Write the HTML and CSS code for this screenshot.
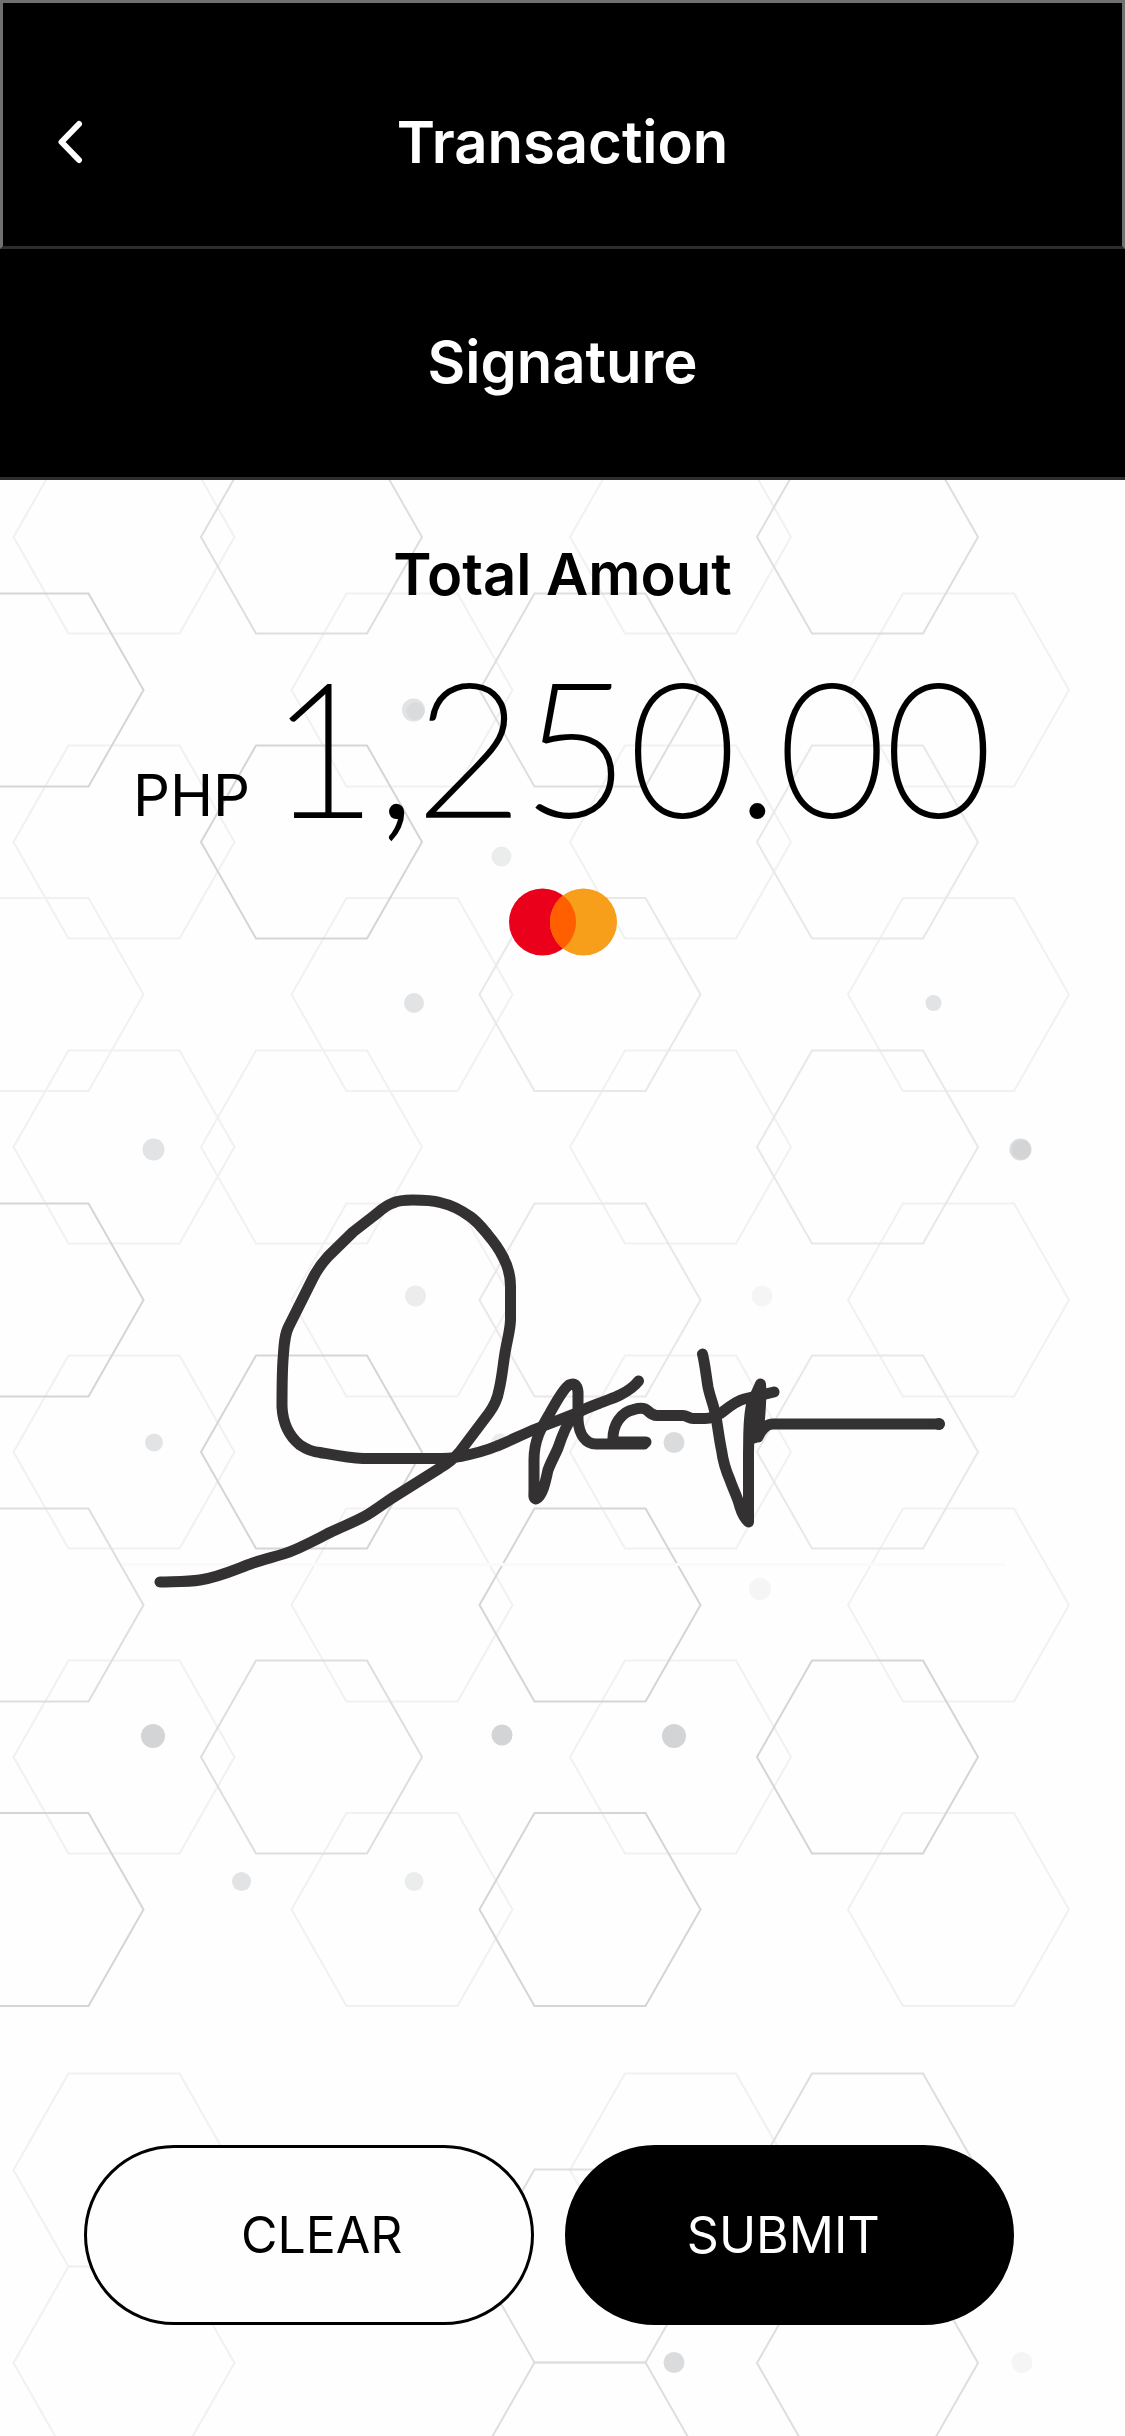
FILE: index.html
```html
<!DOCTYPE html>
<html lang="en">
<head>
<meta charset="utf-8">
<meta name="viewport" content="width=device-width, initial-scale=1">
<title>Transaction</title>
<link rel="stylesheet" href="styles.css">
</head>
<body>
<div class="screen">
  <header class="topbar">
    <button class="back" type="button" aria-label="Back">
      <svg class="back-icon" viewBox="0 0 26 44" aria-hidden="true"><path d="M22 4 4.500 22 22 40"/></svg>
    </button>
    <h1 class="heading">Transaction</h1>
  </header>
  <div class="subbar"><h2 class="heading">Signature</h2></div>

  <main class="content">
    <svg class="pattern" viewBox="0 480 1125 1956" preserveAspectRatio="xMidYMin slice" aria-hidden="true">
      <defs>
        <path id="hex" d="M-110.500 0-55.500-96.500H55.500L110.500 0 55.500 96.500H-55.500Z" vector-effect="non-scaling-stroke"/>
      </defs>
      <g class="hex hex-faint">
        <use href="#hex" x="124" y="537"/><use href="#hex" x="680.500" y="537"/>
        <use href="#hex" x="402" y="690"/><use href="#hex" x="958.500" y="690"/>
        <use href="#hex" x="124" y="842"/><use href="#hex" x="680.500" y="842"/>
        <use href="#hex" x="33" y="994.500"/><use href="#hex" x="402" y="994.500"/><use href="#hex" x="958.500" y="994.500"/>
        <use href="#hex" x="124" y="1147"/><use href="#hex" x="311.500" y="1147"/><use href="#hex" x="680.500" y="1147"/>
        <use href="#hex" x="402" y="1300"/><use href="#hex" x="958.500" y="1300"/>
        <use href="#hex" x="124" y="1452"/><use href="#hex" x="680.500" y="1452"/>
        <use href="#hex" x="402" y="1605"/><use href="#hex" x="958.500" y="1605"/>
        <use href="#hex" x="124" y="1757"/><use href="#hex" x="680.500" y="1757"/>
        <use href="#hex" x="402" y="1909.500"/><use href="#hex" x="958.500" y="1909.500"/>
        <use href="#hex" x="124" y="2170"/><use href="#hex" x="680.500" y="2170"/>
        <use href="#hex" x="124" y="2363"/>
      </g>
      <g class="hex hex-light">
        <use href="#hex" x="867.500" y="842"/><use href="#hex" x="590" y="994.500"/>
        <use href="#hex" x="867.500" y="1147"/><use href="#hex" x="590" y="1300"/>
        <use href="#hex" x="867.500" y="1452"/>
      </g>
      <g class="hex hex-mid">
        <use href="#hex" x="311.500" y="537"/><use href="#hex" x="867.500" y="537"/>
        <use href="#hex" x="590" y="690"/><use href="#hex" x="33" y="1605"/>
        <use href="#hex" x="311.500" y="1757"/><use href="#hex" x="867.500" y="2170"/>
        <use href="#hex" x="590" y="2266"/><use href="#hex" x="867.500" y="2363"/>
        <use href="#hex" x="590" y="2459"/>
      </g>
      <g class="hex hex-dark">
        <use href="#hex" x="33" y="690"/><use href="#hex" x="311.500" y="842"/>
        <use href="#hex" x="33" y="1300"/><use href="#hex" x="311.500" y="1452"/>
        <use href="#hex" x="590" y="1605"/><use href="#hex" x="867.500" y="1757"/>
        <use href="#hex" x="33" y="1909.500"/><use href="#hex" x="590" y="1909.500"/>
      </g>
      <path d="M123 1564.500H1005" stroke="#fafafa" stroke-width="3"/>
      <g fill="#e2e3e5">
        <circle cx="413.500" cy="710" r="11.500"/><circle cx="414" cy="1003" r="10"/>
        <circle cx="933.500" cy="1003" r="8"/><circle cx="153.500" cy="1149.500" r="11"/>
        <circle cx="154" cy="1442.500" r="9"/><circle cx="241.500" cy="1881.500" r="9.500"/>
      </g>
      <g fill="#ebedec">
        <circle cx="501.500" cy="856.500" r="10"/><circle cx="415.500" cy="1296" r="10.500"/>
        <circle cx="500" cy="1442" r="8.500"/><circle cx="414" cy="1881.500" r="9.500"/>
      </g>
      <g fill="#f5f5f5">
        <circle cx="762" cy="1296" r="10.500"/><circle cx="760" cy="1589" r="11"/>
        <circle cx="1022" cy="2362.500" r="10.500"/>
      </g>
      <g fill="#dadbdd">
        <circle cx="415.500" cy="711" r="9"/><circle cx="674" cy="1442.500" r="10.500"/>
        <circle cx="1020.500" cy="1149.500" r="11"/><circle cx="674" cy="2362.500" r="10.500"/>
      </g>
      <g fill="#d3d4d6">
        <circle cx="1021.500" cy="1149.500" r="9.500"/><circle cx="153" cy="1736" r="12"/>
        <circle cx="502" cy="1735" r="10.500"/><circle cx="674" cy="1736" r="12"/>
      </g>
    </svg>

    <section class="summary">
      <h3 class="label">Total Amout</h3>
      <p class="amount"><span class="currency">PHP</span> <span class="value">1,250.00</span></p>
      <svg class="brand" viewBox="0 0 108 68" role="img" aria-label="Mastercard">
        <circle cx="33.500" cy="34" r="33.500" fill="#eb001b"/>
        <circle cx="74.500" cy="34" r="33.500" fill="#f79e1b"/>
        <path d="M54 7.500a33.500 33.500 0 0 1 0 53 33.500 33.500 0 0 1 0-53Z" fill="#ff5f00"/>
      </svg>
    </section>

    <svg class="signature" viewBox="0 1180 1125 420" role="img" aria-label="Customer signature">
      <path d="M160 1582C175 1581.500 188 1582 200 1580 220 1577 236 1569 253 1563 267 1558 280 1556 293 1550.500 306 1545 318 1538.500 330 1532.500 343 1526 355 1522 367 1515 377 1509 387 1501 397 1495L440 1468Q451 1462 460 1451.500L489 1413Q497 1402 499 1390C502 1378 503 1365 505 1353 507 1340 510 1332 510.500 1320V1290C511 1278 508 1266 503 1257 499 1249 494 1242 488 1235 483 1229 477 1221 470 1216.500 461 1210 451 1205 440 1202.500 431 1200 422 1200 413 1200 407 1200 399 1200 393 1203 386 1205 380 1211 373 1216.500L353 1232 328 1256.500C322 1263 317 1270 313 1278L289 1326C284 1335 284 1348 283 1360 282 1375 282 1392 282 1407 283 1425 290 1437 300 1445 306 1449 313 1452 320 1452.500 334 1455 349 1458 363 1458.500H433C442 1458.500 452 1458.500 460 1456.500 473 1454 485 1451 497 1446 510 1441 523 1434 537 1428.500L577 1413C584 1409 592 1406 600 1403 607 1400 614 1398 620 1395 628 1391 634 1387 638.500 1381"/>
      <path d="M572 1418C566 1425 562 1436 558 1448 555 1455 551 1462 548 1470 546 1479 543 1496 536 1499 533 1498 534 1495 534 1490V1460C534 1440 541 1428 550 1413 555 1404 563 1389 569 1385Q577 1381 578 1392V1420C579 1435 586 1444 596 1444H644"/>
      <path d="M646 1442H613C612 1425 621 1412 634 1409.500 639 1408 645 1408 648 1411 651 1414 653 1415.500 657 1415.500H683C687 1415.500 689 1418.500 693 1418.500H705C712 1418.500 716 1416 721 1413 729 1407 736 1401 744 1399L774 1392"/>
      <path d="M702.500 1354C705 1364 706 1375 708 1387 710 1397 714 1406 716 1417 718 1428 719 1438 721.500 1450 723 1461 726 1471 730 1480 733 1489 738 1498 740 1507Q743 1517 748.500 1522V1453C749 1435 748 1418 752 1403L760.500 1384C762 1400 759 1421 758 1437Q764 1424 773 1424H939M752 1405 754 1438"/>
      <circle class="pen-stop" cx="939" cy="1424" r="6"/>
    </svg>

    <div class="actions">
      <button class="button button-outline" type="button">CLEAR</button>
      <button class="button button-solid" type="button">SUBMIT</button>
    </div>
  </main>
</div>
</body>
</html>
```
FILE: styles.css
```css
*, *::before, *::after { box-sizing: border-box; }
body {
  margin: 0;
  background: #fefefe;
  color: #000;
  font-family: Inter, "Noto Sans", sans-serif;
}
h1, h2, h3, p { margin: 0; }
.screen {
  display: flex;
  flex-direction: column;
  min-height: 100vh;
}
.topbar {
  display: grid;
  grid-template-columns: 84px 1fr 84px;
  align-items: end;
  padding: 109px 0 74px;
  background: #000;
  border: 3px solid #707070;
  border-bottom-color: #2d2d2d;
}
.subbar {
  padding: 83px 0 85px;
  background: #000;
  border-bottom: 3px solid #2d2d2d;
}
.heading {
  font-size: 58px;
  font-weight: 600;
  line-height: 60px;
  text-align: center;
  color: #fff;
}
.back {
  display: flex;
  align-items: center;
  height: 60px;
  padding: 0 0 0 54px;
  border: 0;
  background: none;
}
.back-icon {
  width: 26px;
  height: 44px;
  fill: none;
  stroke: #fff;
  stroke-width: 6;
  stroke-linecap: round;
  stroke-linejoin: round;
}
.content {
  position: relative;
  display: flex;
  flex: 1;
  flex-direction: column;
  isolation: isolate;
}
.pattern {
  position: absolute;
  inset: 0;
  z-index: -1;
  width: 100%;
  height: 100%;
}
.hex { fill: none; stroke-width: 2; }
.hex-faint { stroke: #f1f1f1; }
.hex-light { stroke: #e8e8e8; }
.hex-mid { stroke: #dedede; }
.hex-dark { stroke: #d5d5d5; }
.summary {
  display: flex;
  flex-direction: column;
  align-items: center;
  padding-top: 64px;
}
.label {
  font-size: 58px;
  font-weight: 600;
  line-height: 60px;
}
.amount {
  display: flex;
  align-items: baseline;
  gap: 20px;
  margin-top: 41px;
  line-height: 200px;
}
.currency {
  font-size: 58px;
  line-height: 60px;
}
.value {
  font-family: Lato, sans-serif;
  font-size: 184px;
  font-weight: 100;
  -webkit-text-stroke: 4px #000;
}
.brand {
  width: 108px;
  height: 68px;
  margin-top: 43px;
}
.signature {
  width: 100%;
  margin-top: 224px;
  fill: none;
  stroke: #333132;
  stroke-width: 11;
  stroke-linecap: round;
  stroke-linejoin: round;
}
.pen-stop { fill: #333132; stroke: none; }
.actions {
  display: grid;
  grid-template-columns: 1fr 1fr;
  gap: 31px;
  margin-top: auto;
  padding: 0 111px 111px 84px;
}
.button {
  height: 180px;
  border: 3px solid #000;
  border-radius: 90px;
  font: 400 50px/60px Inter, "Noto Sans", sans-serif;
}
.button-outline { padding: 0 0 0 26px; background: #fefefe; color: #000; }
.button-solid { padding: 0 12px 0 0; background: #000; color: #fff; }
```
